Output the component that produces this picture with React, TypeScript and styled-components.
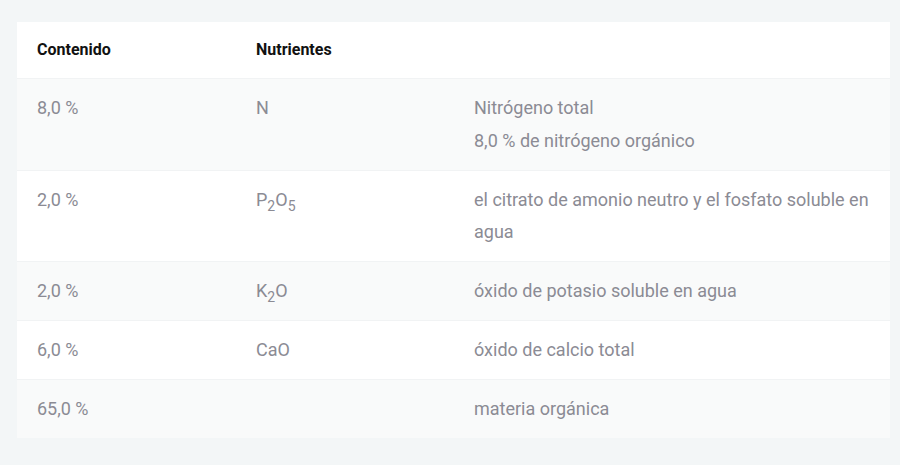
import React from "react";
import styled, { createGlobalStyle } from "styled-components";

const Global = createGlobalStyle`
  html, body { margin: 0; padding: 0; background: #f3f6f7; }
  body { font-family: Roboto, "Liberation Sans", sans-serif; }
`;

const Page = styled.div`
  padding: 22px 10px 0 17px;
  height: 465px;
  box-sizing: border-box;
`;

const Table = styled.table`
  width: 873px;
  border-collapse: collapse;
  table-layout: fixed;
  background: #ffffff;
`;

const HeadCell = styled.th<{ $w?: number }>`
  width: ${(p) => (p.$w ? `${p.$w}px` : "auto")};
  text-align: left;
  font-size: 16px;
  font-weight: 700;
  color: #111111;
  padding: 1px 20px 0 20px;
  height: 56px;
  box-sizing: border-box;
  vertical-align: middle;
  line-height: 20px;
`;

const Row = styled.tr<{ $alt: boolean }>`
  background: ${(p) => (p.$alt ? "#f9fafa" : "#ffffff")};
  border-top: 1px solid #f1f3f4;
`;

const Cell = styled.td`
  padding: 13px 20px 13px 20px;
  font-size: 18px;
  line-height: 32px;
  color: #8b8b94;
  vertical-align: top;
`;

const Line = styled.div`
  & + & {
    margin-top: 1px;
  }
`;

const Sub = styled.sub`
  font-size: 14px;
  line-height: 0;
  vertical-align: -5px;
`;

type RowData = { c: string; n: React.ReactNode; d: string[] };

const rows: RowData[] = [
  { c: "8,0 %", n: "N", d: ["Nitrógeno total", "8,0 % de nitrógeno orgánico"] },
  {
    c: "2,0 %",
    n: (
      <>
        P<Sub>2</Sub>O<Sub>5</Sub>
      </>
    ),
    d: ["el citrato de amonio neutro y el fosfato soluble en agua"],
  },
  {
    c: "2,0 %",
    n: (
      <>
        K<Sub>2</Sub>O
      </>
    ),
    d: ["óxido de potasio soluble en agua"],
  },
  { c: "6,0 %", n: "CaO", d: ["óxido de calcio total"] },
  { c: "65,0 %", n: "", d: ["materia orgánica"] },
];

export default function App() {
  return (
    <>
      <Global />
      <Page>
        <Table>
          <thead>
            <tr>
              <HeadCell $w={219}>Contenido</HeadCell>
              <HeadCell $w={218}>Nutrientes</HeadCell>
              <HeadCell />
            </tr>
          </thead>
          <tbody>
            {rows.map((r, i) => (
              <Row key={i} $alt={i % 2 === 0}>
                <Cell>{r.c}</Cell>
                <Cell>{r.n}</Cell>
                <Cell>
                  {r.d.map((l, j) => (
                    <Line key={j}>{l}</Line>
                  ))}
                </Cell>
              </Row>
            ))}
          </tbody>
        </Table>
      </Page>
    </>
  );
}
